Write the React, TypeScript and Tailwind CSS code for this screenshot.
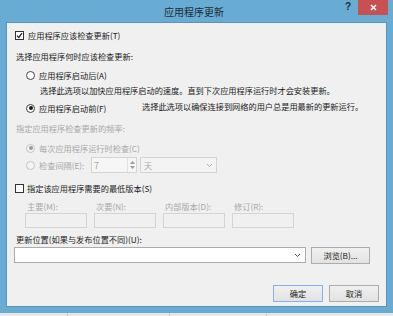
import React from 'react';

const font = "font-['Noto_Sans_CJK_SC',sans-serif]";

const CheckBox = ({ checked }: { checked?: boolean }) => (
  <div className="w-[9px] h-[9px] border border-[#333333] bg-white flex items-center justify-center shrink-0">
    {checked && (
      <svg width="7" height="7" viewBox="0 0 7 7">
        <path d="M1 3.6 L2.8 5.4 L6 1.2" fill="none" stroke="#222" strokeWidth="1.3" />
      </svg>
    )}
  </div>
);

const Radio = ({ checked, disabled }: { checked?: boolean; disabled?: boolean }) => (
  <div
    className={`w-[9px] h-[9px] rounded-full border flex items-center justify-center shrink-0 ${
      disabled ? 'border-[#c4c4c4] bg-[#f4f4f4]' : 'border-[#444444] bg-white'
    }`}
  >
    {checked && (
      <div className={`w-[4px] h-[4px] rounded-full ${disabled ? 'bg-[#9a9a9a]' : 'bg-[#1a1a1a]'}`} />
    )}
  </div>
);

const Chevron = ({ color }: { color: string }) => (
  <svg width="7" height="5" viewBox="0 0 7 5">
    <path d="M1 1 L3.5 3.5 L6 1" fill="none" stroke={color} strokeWidth="1" />
  </svg>
);

const Button = ({ label, primary }: { label: string; primary?: boolean }) => (
  <div
    className={`w-[50px] h-[17px] flex items-center justify-center text-[8.2px] text-[#1a1a1a] bg-gradient-to-b from-[#f0f0f0] to-[#e2e2e2] border ${
      primary ? 'border-[#7eb4ea]' : 'border-[#acacac]'
    }`}
  >
    {label}
  </div>
);

export default function App() {
  const versions = ['主要(M):', '次要(N):', '内部版本(D):', '修订(R):'];

  return (
    <div className={`w-[393px] h-[316px] flex flex-col bg-[#e4e4e4] ${font}`}>
      <div className="h-[313px] bg-[#68acd3] flex flex-col px-[6px] pb-[6px]">
        {/* title bar */}
        <div className="h-[22px] flex items-start -mx-[6px]">
          <div className="flex-1" />
          <div className="h-[22px] flex items-center text-[10px] text-[#1d2b36]">应用程序更新</div>
          <div className="flex-1 flex justify-end items-start pr-[5px]">
            <div className="mt-[2px] mr-[7px] text-[10px] font-bold text-[#1d2b36] leading-none font-['Liberation_Sans',sans-serif]">?</div>
            <div className="w-[30px] h-[15px] bg-[#c75050] flex items-center justify-center">
              <svg width="7" height="7" viewBox="0 0 7 7">
                <path d="M1 1 L6 6 M6 1 L1 6" stroke="#ffffff" strokeWidth="1.6" />
              </svg>
            </div>
          </div>
        </div>

        {/* client area */}
        <div className="flex-1 bg-[#f0f0f0] border border-[#5895bd] flex flex-col text-[8.2px] text-[#1a1a1a] leading-none">
          <div className="mt-[5px] h-[14px] flex items-center ml-[8px] gap-[4px]">
            <CheckBox checked />
            <span>应用程序应该检查更新(T)</span>
          </div>

          <div className="mt-[7px] h-[14px] flex items-center ml-[9px]">选择应用程序何时应该检查更新:</div>

          <div className="mt-[5px] h-[14px] flex items-center ml-[19px] gap-[4px]">
            <Radio />
            <span>应用程序启动后(A)</span>
          </div>

          <div className="mt-[1px] h-[14px] flex items-center ml-[33px]">
            选择此选项以加快应用程序启动的速度。直到下次应用程序运行时才会安装更新。
          </div>

          <div className="mt-[4px] h-[14px] flex items-center ml-[19px] gap-[4px]">
            <Radio checked />
            <span className="w-[99px]">应用程序启动前(F)</span>
            <span className="-mt-[3px]">选择此选项以确保连接到网络的用户总是用最新的更新运行。</span>
          </div>

          <div className="mt-[6px] h-[14px] flex items-center ml-[9px] text-[#a8a8a8]">指定应用程序检查更新的频率:</div>

          <div className="mt-[6px] h-[14px] flex items-center ml-[19px] gap-[4px] text-[#a8a8a8]">
            <Radio checked disabled />
            <span>每次应用程序运行时检查(C)</span>
          </div>

          <div className="mt-[2px] h-[16px] flex items-center ml-[19px] text-[#a8a8a8]">
            <Radio disabled />
            <span className="ml-[4px] w-[52px]">检查间隔(E):</span>
            <div className="w-[46px] h-[16px] border border-[#d4d4d4] bg-[#f6f6f6] flex items-stretch">
              <span className="flex-1 flex items-center pl-[2px] text-[9px]">7</span>
              <div className="w-[9px] flex flex-col items-center justify-center gap-[2px] border-l border-[#e2e2e2]">
                <svg width="5" height="3" viewBox="0 0 5 3"><path d="M0 3 L2.5 0 L5 3 Z" fill="#9a9a9a" /></svg>
                <svg width="5" height="3" viewBox="0 0 5 3"><path d="M0 0 L2.5 3 L5 0 Z" fill="#9a9a9a" /></svg>
              </div>
            </div>
            <div className="ml-[3px] w-[77px] h-[16px] border border-[#d4d4d4] bg-[#f3f3f3] flex items-center justify-between px-[3px]">
              <span>天</span>
              <Chevron color="#b0b0b0" />
            </div>
          </div>

          <div className="mt-[8px] h-[14px] flex items-center ml-[8px] gap-[3px]">
            <CheckBox />
            <span>指定该应用程序需要的最低版本(S)</span>
          </div>

          <div className="mt-[4px] flex ml-[18px] gap-[7px] text-[#a8a8a8]">
            {versions.map((v) => (
              <div key={v} className="w-[62px] flex flex-col">
                <span className="h-[14px] flex items-center pl-[2px]">{v}</span>
                <div className="h-[15px] border border-[#d4d4d4] bg-[#f0f0f0]" />
              </div>
            ))}
          </div>

          <div className="mt-[4px] h-[14px] flex items-center ml-[9px]">更新位置(如果与发布位置不同)(U):</div>

          <div className="mt-[1px] flex ml-[7px] gap-[5px]">
            <div className="w-[292px] h-[16px] bg-white border border-[#acacac] flex items-center justify-end pr-[4px]">
              <Chevron color="#555555" />
            </div>
            <div className="w-[59px] h-[17px] flex items-center justify-center bg-gradient-to-b from-[#f0f0f0] to-[#e2e2e2] border border-[#acacac]">
              浏览(B)...
            </div>
          </div>

          <div className="mt-[21px] flex justify-end pr-[7px] gap-[6px]">
            <Button label="确定" primary />
            <Button label="取消" />
          </div>
        </div>
      </div>
      <div className="h-[3px] flex bg-[#e6e6e6]">
        <div className="w-[68px] border-r border-[#c8c8c8]" />
        <div className="w-[102px] border-r border-[#c8c8c8]" />
        <div className="w-[97px] border-r border-[#c8c8c8]" />
      </div>
    </div>
  );
}
